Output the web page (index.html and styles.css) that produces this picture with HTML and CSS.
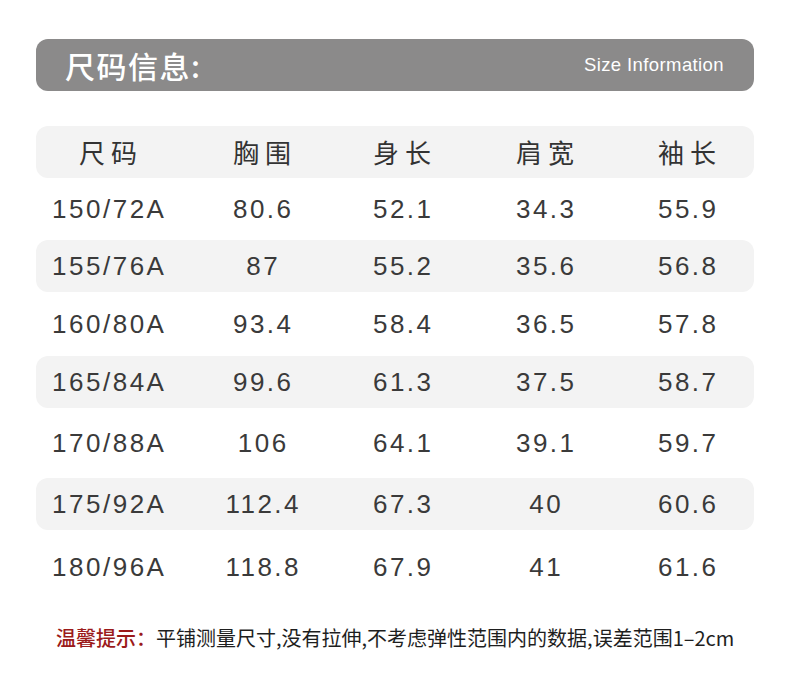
FILE: index.html
```html
<!DOCTYPE html>
<html lang="zh">
<head>
<meta charset="utf-8">
<title>尺码信息</title>
<link rel="stylesheet" href="styles.css">
</head>
<body>
<div class="page">
  <div class="bar">
    <div class="bar-title">尺码信息:</div>
    <div class="bar-sub">Size Information</div>
  </div>
  <div class="table">
    <div class="row head shaded">
      <div class="cell">尺码</div><div class="cell">胸围</div><div class="cell">身长</div><div class="cell">肩宽</div><div class="cell">袖长</div>
    </div>
    <div class="row r1">
      <div class="cell num">150/72A</div><div class="cell num">80.6</div><div class="cell num">52.1</div><div class="cell num">34.3</div><div class="cell num">55.9</div>
    </div>
    <div class="row shaded">
      <div class="cell num">155/76A</div><div class="cell num">87</div><div class="cell num">55.2</div><div class="cell num">35.6</div><div class="cell num">56.8</div>
    </div>
    <div class="row r3">
      <div class="cell num">160/80A</div><div class="cell num">93.4</div><div class="cell num">58.4</div><div class="cell num">36.5</div><div class="cell num">57.8</div>
    </div>
    <div class="row shaded">
      <div class="cell num">165/84A</div><div class="cell num">99.6</div><div class="cell num">61.3</div><div class="cell num">37.5</div><div class="cell num">58.7</div>
    </div>
    <div class="row r5">
      <div class="cell num">170/88A</div><div class="cell num">106</div><div class="cell num">64.1</div><div class="cell num">39.1</div><div class="cell num">59.7</div>
    </div>
    <div class="row shaded">
      <div class="cell num">175/92A</div><div class="cell num">112.4</div><div class="cell num">67.3</div><div class="cell num">40</div><div class="cell num">60.6</div>
    </div>
    <div class="row r7">
      <div class="cell num">180/96A</div><div class="cell num">118.8</div><div class="cell num">67.9</div><div class="cell num">41</div><div class="cell num">61.6</div>
    </div>
  </div>
  <p class="note"><span class="note-label">温馨提示：</span>平铺测量尺寸,没有拉伸,不考虑弹性范围内的数据,误差范围1–2cm</p>
</div>
</body>
</html>
```
FILE: styles.css
```css
* { box-sizing: border-box; }
html, body { margin: 0; padding: 0; background: #ffffff; }
body {
  font-family: "Liberation Sans", "Noto Sans CJK SC", sans-serif;
  color: #333333;
}
.page {
  width: 790px;
  height: 700px;
  padding: 39px 36px 0 36px;
}
.bar {
  height: 52px;
  background: #8b8a8a;
  border-radius: 12px;
  display: flex;
  align-items: center;
  justify-content: space-between;
  padding: 0 30px 0 29px;
  color: #ffffff;
}
.bar-title {
  font-family: "Noto Sans CJK SC", sans-serif;
  font-size: 30px;
  font-weight: 500;
  letter-spacing: 1.5px;
  line-height: 1;
  padding-bottom: 1px;
}
.bar-sub {
  font-family: "Liberation Sans", "Noto Sans", sans-serif;
  font-size: 18.5px;
  letter-spacing: 0.4px;
  line-height: 1;
}
.table {
  margin-top: 35px;
  display: flex;
  flex-direction: column;
}
.row {
  display: grid;
  grid-template-columns: 144px 164px 116px 170px 114px;
  align-items: center;
  height: 52px;
  border-radius: 12px;
}
.row.shaded { background: #f3f3f3; }
.row.r1 { height: 62px; }
.row.r3 { height: 64px; }
.row.r5 { height: 70px; }
.row.r7 { height: 73px; }
.cell {
  text-align: center;
  line-height: 1;
}
.head .cell {
  font-family: "Noto Sans CJK SC", sans-serif;
  font-size: 26px;
  letter-spacing: 6px;
  padding-left: 6px;
  color: #333333;
}
.cell.num {
  font-size: 26px;
  letter-spacing: 2.5px;
  padding-left: 2.5px;
  color: #3a3a3a;
}
.note {
  margin: 21px 0 0 20px;
  font-family: "Noto Sans CJK SC", sans-serif;
  font-size: 20px;
  font-weight: 400;
  line-height: 28px;
  color: #1e1e1e;
  white-space: nowrap;
}
.note-label { color: #9b1a1a; font-weight: 500; }
```
